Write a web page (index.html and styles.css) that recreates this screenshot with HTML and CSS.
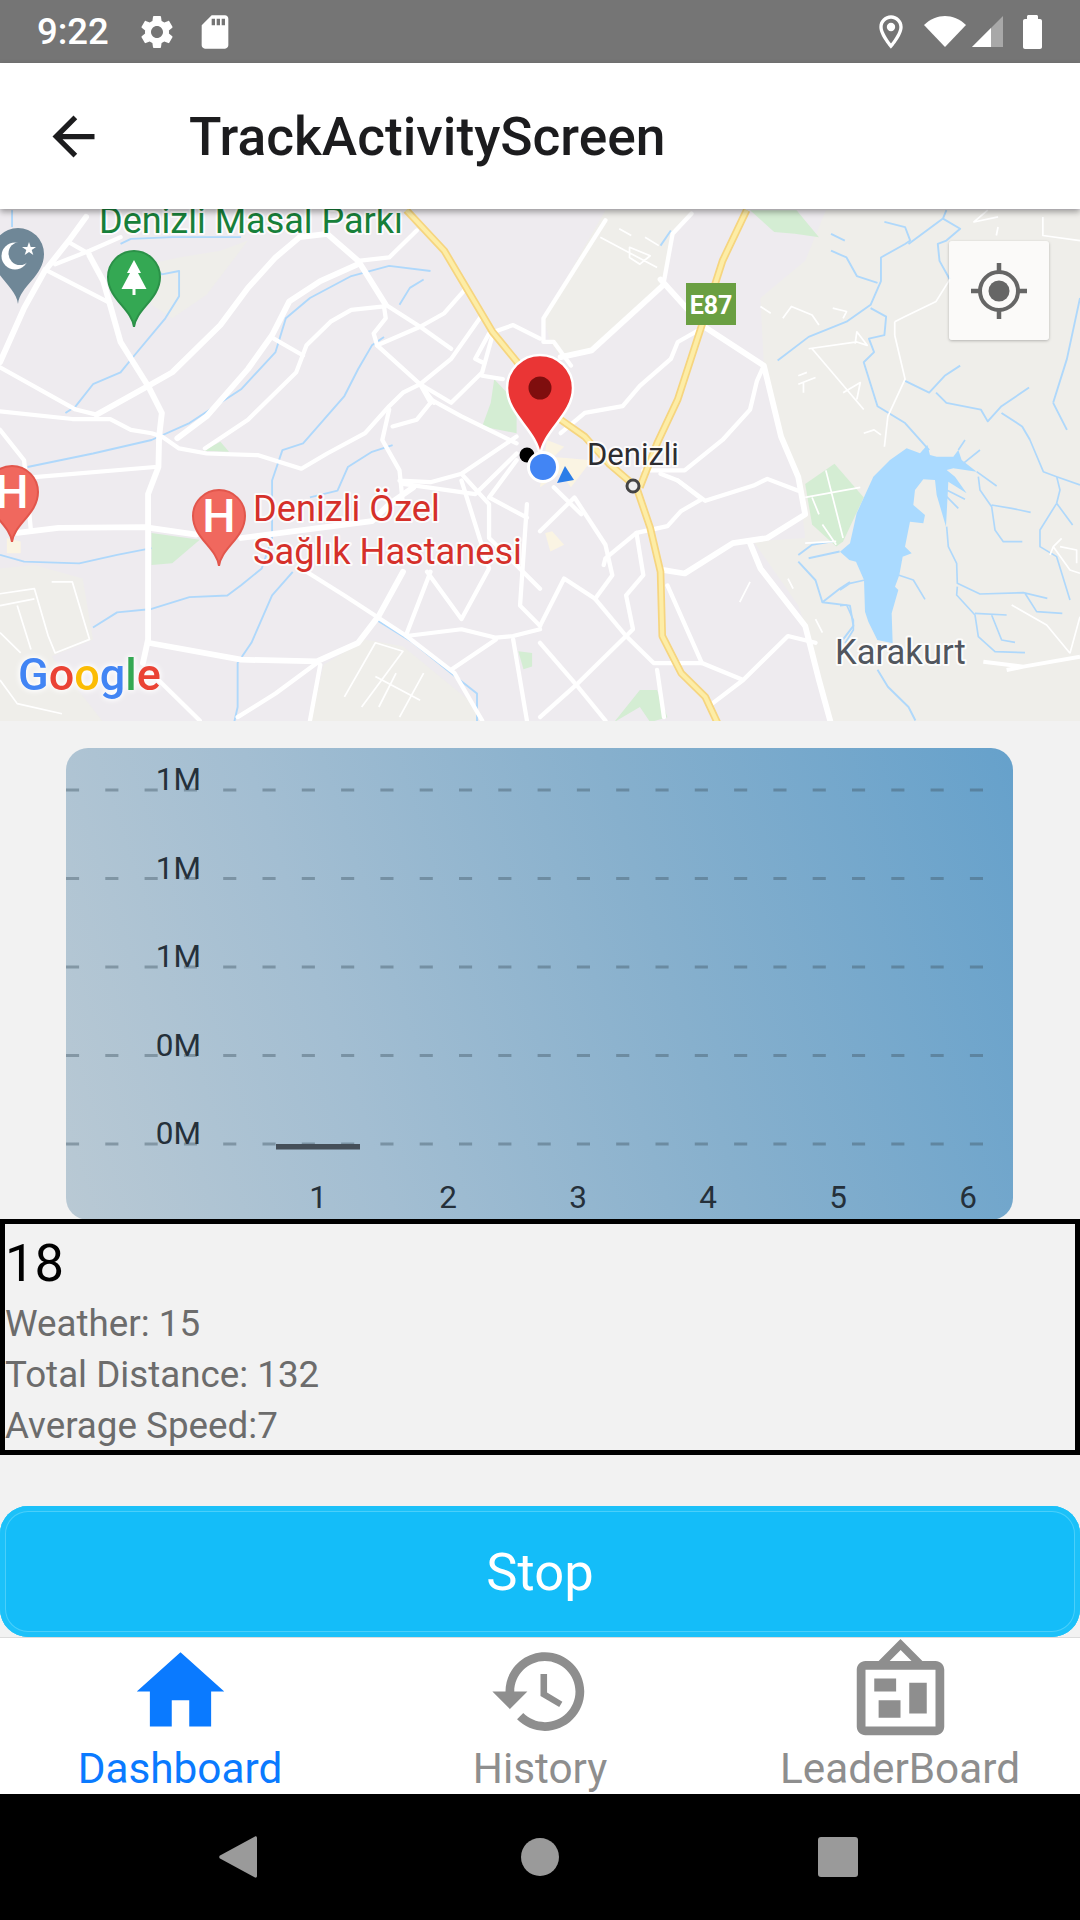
FILE: index.html
```html
<!DOCTYPE html>
<html lang="en">
<head>
<meta charset="utf-8">
<title>TrackActivityScreen</title>
<link rel="stylesheet" href="styles.css">
</head>
<body>
<div class="phone">
  <div class="status-bar">
    <div class="status-left">
      <span class="clock">9:22</span>
      <svg class="si" viewBox="0 0 24 24"><path d="M19.14 12.94c.04-.3.06-.61.06-.94 0-.32-.02-.64-.07-.94l2.03-1.58c.18-.14.23-.41.12-.61l-1.92-3.32c-.12-.22-.37-.29-.59-.22l-2.39.96c-.5-.38-1.03-.7-1.62-.94l-.36-2.54c-.04-.24-.24-.41-.48-.41h-3.84c-.24 0-.43.17-.47.41l-.36 2.54c-.59.24-1.13.57-1.62.94l-2.39-.96c-.22-.08-.47 0-.59.22L2.74 8.87c-.12.21-.08.47.12.61l2.03 1.58c-.05.3-.09.63-.09.94s.02.64.07.94l-2.03 1.58c-.18.14-.23.41-.12.61l1.92 3.32c.12.22.37.29.59.22l2.39-.96c.5.38 1.03.7 1.62.94l.36 2.54c.05.24.24.41.48.41h3.84c.24 0 .44-.17.47-.41l.36-2.54c.59-.24 1.13-.56 1.62-.94l2.39.96c.22.08.47 0 .59-.22l1.92-3.32c.12-.22.07-.47-.12-.61l-2.01-1.58zM12 15.6c-1.98 0-3.6-1.62-3.6-3.6s1.62-3.6 3.6-3.6 3.6 1.62 3.6 3.6-1.62 3.6-3.6 3.6z"/></svg>
      <svg class="si" viewBox="0 0 24 24"><path d="M18 2h-8L4.02 8 4 20c0 1.1.9 2 2 2h12c1.1 0 2-.9 2-2V4c0-1.1-.9-2-2-2zm-6 6h-2V4h2v4zm3 0h-2V4h2v4zm3 0h-2V4h2v4z"/></svg>
    </div>
    <div class="status-right">
      <svg class="si" viewBox="0 0 24 24"><path d="M12 2C8.13 2 5 5.13 5 9c0 5.25 7 13 7 13s7-7.75 7-13c0-3.87-3.13-7-7-7zM7 9c0-2.76 2.24-5 5-5s5 2.24 5 5c0 2.88-2.88 7.19-5 9.88C9.92 16.21 7 11.85 7 9z"/><circle cx="12" cy="9" r="2.5"/></svg>
      <svg class="si-wifi" viewBox="0 0 42 32"><path d="M0 9C6 3 14 0 21 0s15 3 21 9L21 31z"/></svg>
      <svg class="si-signal" viewBox="0 0 31 32"><path class="sig-dim" d="M0 31L31 0v31z"/><path d="M0 31L19 12v19z"/></svg>
      <svg class="si-batt" viewBox="0 0 19 34"><path d="M4 4V1.5C4 .7 4.7 0 5.5 0h8c.8 0 1.500.7 1.500 1.500V4h2c1.100 0 2 .9 2 2v26c0 1.100-.9 2-2 2H2c-1.100 0-2-.9-2-2V6c0-1.100.9-2 2-2z"/></svg>
    </div>
  </div>

  <header class="app-header">
    <svg class="back" viewBox="0 0 24 24"><path d="M20 11H7.83l5.59-5.59L12 4l-8 8 8 8 1.41-1.41L7.83 13H20v-2z"/></svg>
    <h1 class="title">TrackActivityScreen</h1>
  </header>

  <section class="map">
    <svg class="map-canvas" viewBox="0 209 1080 512">
      <defs>
        <path id="pin" d="M0 76C-2 58-26 48-26 26A26 26 0 1 1 26 26C26 48 2 58 0 76Z"/>
      </defs>
      <rect x="0" y="209" width="1080" height="512" class="land"/>

      <g transform="translate(0 200) scale(.3444 .338)">
        <path class="terrain" d="M0 1090L100 1080L240 1120L270 1300L150 1350L300 1545L0 1545Z"/>
        <path class="terrain" d="M940 1375L1060 1300L1170 1320L1385 1500L1385 1545L900 1545Z"/>
        <path class="terrain" d="M430 190L520 170L640 150L720 120L600 280L500 350L440 310Z"/>
        <path class="park" d="M440 985L580 1005L500 1075L440 1080Z"/>
        <path class="park" d="M590 742L640 715L665 745Z"/>
        <path class="park" d="M1435 530L1500 600L1500 690L1400 670L1425 600Z"/>
        <path class="park" d="M1505 1335L1545 1340L1545 1380L1520 1388Z"/>
        <path class="built" d="M20 1000L60 1010L60 1045L20 1045Z"/>
        <g class="stream">
          <path d="M35 30L35 80"/>
          <path d="M440 190L470 220L520 210L520 285L480 350L390 460L350 510L270 545L220 610L190 630"/>
          <path d="M350 130L380 115L500 110L700 110"/>
          <path d="M80 790L270 750L440 710L550 660L700 560L800 450L830 350L900 290L1020 225L1130 195L1250 210"/>
          <path d="M1160 310L1190 260L1230 235"/>
          <path d="M1115 405L1080 430L1040 500L1000 580L880 720L820 740L790 830L790 1000L760 1090L700 1140L660 1170L550 1175L440 1210L340 1220L270 1265"/>
          <path d="M1140 725L1080 745L1010 790L980 860L900 880"/>
          <path d="M0 1050L70 1070L230 1075L340 1050L440 1030"/>
          <path d="M850 1100L790 1170L730 1310L690 1370L690 1500L680 1545"/>
          <path d="M1090 1240L1200 1310L1310 1400L1385 1460L1385 1545"/>
        </g>
        <g class="road-thin">
          <path d="M0 1165L100 1150L140 1290L160 1340L260 1300L210 1130L150 1130"/>
          <path d="M0 1200L100 1180M50 1200L90 1330M0 1280L60 1340"/>
          <path d="M1000 1470L1090 1310L1170 1335L1050 1500M1090 1410L1220 1480M1150 1400L1100 1500M1230 1400L1160 1530"/>
          <path d="M0 1420L50 1490L180 1520"/>
        </g>
        <g class="road">
          <path d="M0 495L220 620L280 635"/>
          <path d="M0 625L210 648L320 648L380 680L440 690L470 700L520 735L600 750L750 755L875 795L950 750L1060 690L1130 610L1170 570L1220 545L1250 600"/>
          <path class="major" d="M260 165L300 240L350 420L430 550L470 630L462 700L460 790L430 870L430 1300L415 1370"/>
          <path class="major" d="M0 480L70 320L130 210L200 120L250 50"/>
          <path d="M130 205L320 305M160 190L260 150L350 110M200 125L260 160"/>
          <path class="major" d="M280 635L430 550L500 510L640 370L720 260L800 170L870 110L950 100L1040 180L1120 310"/>
          <path d="M1040 180L1130 170L1210 90"/>
          <path class="major" d="M515 705L600 640L720 500L790 400L840 300L930 240L1040 190"/>
          <path d="M595 735L720 650L860 510L890 430L960 360L1020 325L1115 315L1120 350L1085 395L1095 430L1220 545L1260 600"/>
          <path d="M795 410L880 460"/>
          <path d="M1120 310L1220 375L1310 440M1095 430L1220 375L1290 335L1350 265"/>
          <path d="M1220 545L1310 470L1400 340M1400 480L1380 470L1420 395L1490 370L1568 410"/>
          <path d="M100 820L450 790"/>
          <path class="major" d="M50 985L170 970L420 968L570 990M700 1000L1080 950L1130 900L1200 850"/>
          <path class="major" d="M430 1310L700 1360L920 1365L1040 1310L1100 1230L1170 1100"/>
          <path d="M920 1370L800 1460L690 1530M930 1375L900 1540"/>
          <path d="M890 1100L1000 1170L1180 1290L1320 1400L1400 1540"/>
          <path d="M1180 1290L1340 1270L1440 1295L1490 1290L1568 1270M1180 1285L1250 1100M1240 1100L1340 1240L1420 1090L1340 830"/>
          <path d="M1440 1300L1310 1390M1490 1300L1530 1540"/>
          <path d="M1130 620L1110 710L1160 800L1170 900M1160 830L1250 835L1340 810L1500 700"/>
          <path d="M1340 810L1420 900L1420 1000L1568 1150"/>
          <path d="M1250 590L1340 640L1500 720M1250 600L1210 650L1140 670"/>
          <path d="M1220 545L1310 600L1400 510L1430 400M1400 520L1460 530"/>
          <path d="M1500 750L1380 870L1170 840M1500 770L1420 880L1530 940M1530 900L1510 1200L1568 1260"/>
          <path d="M0 680L70 770L90 980"/>
          <path d="M460 1420L580 1540"/>
        </g>
        <path class="hw-out" d="M1180 30L1290 150L1430 390L1510 490"/>
        <path class="hw-in" d="M1180 30L1290 150L1430 390L1510 490"/>
      </g>

      <g transform="translate(540 200) scale(.3444 .338)">
        <path class="terrain" d="M190 30L10 350L30 420L60 465L150 445L360 250L385 100L440 30Z"/>
        <path class="terrain" d="M830 30L770 180L640 290L650 490L700 700L750 820L770 1000L620 1010L750 1200L800 1350L850 1545L1568 1545L1568 30Z"/>
        <path class="park" d="M610 30L745 30L810 110L740 100L680 95Z"/>
        <path class="park" d="M770 840L855 780L940 880L880 1010L860 1025L790 960Z"/>
        <path class="park" d="M215 1545L290 1450L340 1450L370 1530L320 1545L290 1500Z"/>
        <path class="built" d="M20 710L70 730L40 760L150 770L120 810L90 850L60 810L0 850Z"/>
        <path class="built" d="M15 985L35 980L70 1020L30 1040Z"/>
        <g class="stream">
          <path d="M1000 65L1060 80L1075 120L1060 130L990 170L990 240L960 310L890 360L780 405L690 475"/>
          <path d="M845 100L885 120M845 150L890 170L920 225L980 245"/>
          <path d="M1180 30L1170 55L1220 85L1180 120L1155 130L1160 180L1190 235M1070 130L1170 55"/>
          <path d="M960 320L1005 345L1000 400L955 410L970 450L940 480L980 610L1060 660L1130 740"/>
          <path d="M1060 535L1130 570L1175 520L1220 490M1150 570L1180 600L1280 620L1300 655L1340 610L1420 555"/>
          <path d="M1340 630L1400 670L1423 710"/>
          <path d="M900 1130L870 1150L820 1190L900 1200L910 1260L880 1300"/>
          <path d="M780 1060L870 1040M750 1070L800 1125L820 1190M750 1050L790 1020L850 1010"/>
          <path d="M1490 600L1530 680M1490 600L1530 470L1568 290"/>
          <path d="M980 1390L1010 1440L1070 1500L1090 1540"/>
          <path d="M380 90L350 135"/>
        </g>
        <g class="road-thin">
          <path d="M1300 30L1260 65L1330 50M1330 80L1325 105M1460 50L1460 105L1568 120"/>
          <path d="M1030 360L1060 345L1150 300L1190 235M1030 400L1060 530L1010 640L1000 730M1030 360L1030 400"/>
          <path d="M780 440L920 420L950 430L920 390L915 425M790 440L940 620M880 570L930 540L920 590"/>
          <path d="M705 350L730 315L790 340L810 370M850 320L890 330L880 350M640 315L670 335"/>
          <path d="M750 520L775 510M750 545L800 525M765 570V540"/>
          <path d="M940 690L970 680L990 695"/>
          <path d="M770 880L930 850M790 880L810 930M830 800L880 1000M820 960L860 1020M770 1015L860 1010"/>
          <path d="M580 1190L610 1130M720 1120L735 1150M800 1240L820 1280"/>
          <path d="M175 110L340 200M230 85L265 105M305 110L345 135M260 140L320 165L290 190L260 170Z"/>
        </g>
        <g class="road">
          <path d="M190 60L10 350L10 420L40 420L90 490"/>
          <path class="major" d="M60 465L150 445L360 250"/>
          <path d="M360 240L385 100L440 40"/>
          <path class="major" d="M350 235L470 370L650 490L700 700L750 820L770 930L660 1000L560 1015L420 1105L360 1095"/>
          <path d="M650 490L630 535L610 620L530 710L420 800L300 800"/>
          <path d="M470 380L400 420L380 470L290 550L240 610L130 630L60 690"/>
          <path d="M750 860L660 825L620 845L480 890L400 830L350 810"/>
          <path d="M400 830L470 885L410 920L370 965L280 985L190 1060L185 1080"/>
          <path class="major" d="M610 1015L640 1090L770 1260L810 1420L850 1568"/>
          <path d="M0 1260L70 1120L160 1180L250 1290L330 1370L470 1370"/>
          <path d="M280 985L300 1110L250 1170L270 1270L110 1430L0 1530"/>
          <path d="M0 980L100 880L190 1020L210 1110L160 1180"/>
          <path d="M40 850L120 930M0 1310L110 1440L190 1540"/>
          <path d="M470 1370L590 1420L720 1290L800 1310M590 1420L500 1490M340 1390L360 1530M370 1140L470 1370"/>
        </g>
        <path class="hw-out" d="M60 650L130 700L200 780L280 850L320 970L350 1100L355 1290L410 1400L480 1470L525 1568"/>
        <path class="hw-out" d="M600 30L530 180L470 370L400 590L340 720L290 850"/>
        <path class="hw-in" d="M60 650L130 700L200 780L280 850L320 970L350 1100L355 1290L410 1400L480 1470L525 1568"/>
        <path class="hw-in" d="M600 30L530 180L470 370L400 590L340 720L290 850"/>
      </g>

      <!-- lake district, traced at 1/3 scale -->
      <g transform="translate(840 440) scale(.3333)">
        <path class="lake" d="M200 25L240 40L262 15L270 45L290 50L340 50L355 30L365 60L410 95L340 85L320 90L345 110L380 160L325 125L318 260L290 165L285 120L250 118L225 150L220 195L255 225L250 250L210 245L195 320L215 340L188 350L178 405L165 440L175 450L155 520L158 610L112 600L85 545L75 515L72 420L48 365L28 360L0 335L30 310L50 220L100 110L150 60Z"/>
        <g class="stream-fine">
          <path d="M320 260L325 320L350 370L352 430L420 462L550 458L622 475"/>
          <path d="M352 440L350 465L405 525L415 590L465 635L555 638"/>
          <path d="M405 520L500 525M455 525L485 600L525 607"/>
          <path d="M555 460L590 515L667 520"/>
          <path d="M410 95L470 138M415 110L420 150L455 200L465 270L490 305L547 305M455 195L515 205L572 217"/>
          <path d="M370 70L420 30M355 30L375 0M320 150L375 178M320 170L355 205"/>
          <path d="M570 0L610 95L650 110L660 150L650 190L600 270L600 320L650 350L690 480M650 190L698 255M650 110L720 135"/>
          <path d="M175 405L220 420L255 478M75 420L30 430L0 450M0 497L20 495L40 540L40 570L15 610"/>
        </g>
        <g class="road-fine">
          <path d="M515 495L620 555L690 640M720 530L690 640"/>
          <path d="M665 295L640 320L690 390L720 400M660 320L710 330L710 370M640 320L630 345"/>
        </g>
        <path class="road-wide" d="M720 650L550 680L430 665M550 680L500 690"/>
      </g>

      <!-- place pins -->
      <g transform="translate(18 228)">
        <use href="#pin" class="pin-slate"/>
        <circle cx="-3" cy="28" r="13.500" class="pin-mark"/>
        <circle cx="2" cy="25.500" r="11.500" class="pin-slate-in"/>
        <path class="pin-mark" d="M11 14l1.700 5h5.300l-4.300 3.100 1.600 5-4.300-3.100-4.300 3.100 1.600-5-4.300-3.100h5.300z"/>
      </g>
      <g transform="translate(134 251)">
        <use href="#pin" class="pin-green"/>
        <path class="pin-mark" d="M0 9L7 22H4L12.500 38H1.500V44H-1.500V38H-12.500L-4 22H-7Z"/>
      </g>
      <g transform="translate(12 466)">
        <use href="#pin" class="pin-red"/>
        <text class="pin-h" x="0" y="42">H</text>
      </g>
      <g transform="translate(219 490)">
        <use href="#pin" class="pin-red"/>
        <text class="pin-h" x="0" y="42">H</text>
      </g>

      <!-- labels -->
      <text class="lbl lbl-green" x="99" y="233">Denizli Masal Parkı</text>
      <text class="lbl lbl-red" x="253" y="521">Denizli Özel</text>
      <text class="lbl lbl-red" x="253" y="564">Sağlık Hastanesi</text>
      <text class="lbl lbl-dark" x="587" y="465">Denizli</text>
      <text class="lbl lbl-grey" x="835" y="664">Karakurt</text>
      <circle cx="633" cy="486" r="6" class="city-dot"/>

      <rect x="686" y="283" width="50" height="42" class="shield"/>
      <text class="shield-text" x="711" y="314">E87</text>

      <text class="google" x="18" y="690"><tspan class="g-blue">G</tspan><tspan class="g-red">o</tspan><tspan class="g-yellow">o</tspan><tspan class="g-blue">g</tspan><tspan class="g-green">l</tspan><tspan class="g-red">e</tspan></text>

      <!-- route markers -->
      <circle cx="527" cy="455" r="7.500" class="blob"/>
      <path class="arrow" d="M557 483L565 466L574 480Z"/>
      <path class="marker" d="M540 456C537 430 507 415 507 388A33 33 0 1 1 573 388C573 415 543 430 540 456Z"/>
      <circle cx="540" cy="388" r="11.500" class="marker-dot"/>
      <circle cx="543" cy="467" r="14.500" class="me"/>
    </svg>

    <div class="locate">
      <svg class="locate-icon" viewBox="0 0 60 60"><circle cx="30" cy="30" r="19" class="loc-ring"/><circle cx="30" cy="30" r="10.500" class="loc-dot"/><path class="loc-tick" d="M30 2V11M30 49V58M2 30H11M49 30H58"/></svg>
    </div>
  </section>

  <main class="content">
    <div class="chart">
      <svg class="chart-canvas" viewBox="66 748 947 472">
        <g class="grid">
          <path d="M66 790H985"/>
          <path d="M66 878.500H985"/>
          <path d="M66 967H985"/>
          <path d="M66 1055.500H985"/>
          <path d="M66 1144H985"/>
        </g>
        <rect x="276" y="1144" width="84" height="5.500" class="bar"/>
        <g class="axis-y">
          <text x="201" y="790">1M</text>
          <text x="201" y="878.500">1M</text>
          <text x="201" y="967">1M</text>
          <text x="201" y="1055.500">0M</text>
          <text x="201" y="1144">0M</text>
        </g>
        <g class="axis-x">
          <text x="318" y="1208">1</text>
          <text x="448" y="1208">2</text>
          <text x="578" y="1208">3</text>
          <text x="708" y="1208">4</text>
          <text x="838" y="1208">5</text>
          <text x="968" y="1208">6</text>
        </g>
      </svg>
    </div>

    <div class="info">
      <div class="info-main">18</div>
      <div class="info-line">Weather: 15</div>
      <div class="info-line">Total Distance: 132</div>
      <div class="info-line">Average Speed:7</div>
    </div>

    <button class="stop">Stop</button>
  </main>

  <nav class="tabs">
    <div class="tab tab-active">
      <svg class="tab-icon" viewBox="0 0 24 24"><path d="M10 20v-6h4v6h5v-8h3L12 3 2 12h3v8z"/></svg>
      <span class="tab-label">Dashboard</span>
    </div>
    <div class="tab">
      <svg class="tab-icon" viewBox="0 0 24 24"><path d="M13 3c-4.970 0-9 4.030-9 9H1l3.890 3.890.07.14L9 12H6c0-3.870 3.130-7 7-7s7 3.130 7 7-3.130 7-7 7c-1.930 0-3.680-.79-4.940-2.060l-1.420 1.420C8.270 19.990 10.510 21 13 21c4.970 0 9-4.030 9-9s-4.030-9-9-9zm-1 5v5l4.280 2.540.72-1.210-3.500-2.080V8H12z"/></svg>
      <span class="tab-label">History</span>
    </div>
    <div class="tab">
      <svg class="tab-icon" viewBox="0 0 24 24"><path d="M12.040 2.500L9.530 5H14.530L12.040 2.500M4 7V20H20V7H4M12 0L17 5V5H20C21.100 5 22 5.890 22 7V20C22 21.100 21.100 22 20 22H4C2.900 22 2 21.100 2 20V7C2 5.890 2.900 5 4 5H7V5L12 0M7 18V14H12V18H7M14 17V10H18V17H14M6 12V9H11V12H6Z"/></svg>
      <span class="tab-label">LeaderBoard</span>
    </div>
  </nav>

  <div class="nav-bar">
    <svg class="nav-back" viewBox="0 0 38 42"><path d="M36 0.500C37 0 38 .8 38 2V40C38 41.200 37 42 36 41.500L1 22.500C0 22 0 20 1 19.500Z"/></svg>
    <span class="nav-home"></span>
    <span class="nav-recent"></span>
  </div>
</div>
</body>
</html>
```

FILE: styles.css
```css
* { box-sizing: border-box; }
html, body { margin: 0; padding: 0; }
body { width: 1080px; height: 1920px; overflow: hidden; background: #f2f2f2; font-family: Roboto, "Noto Sans", sans-serif; }
.phone { width: 1080px; height: 1920px; display: flex; flex-direction: column; }

/* status bar */
.status-bar { height: 63px; flex: none; background: #757575; display: flex; justify-content: space-between; align-items: center; color: #fff; padding: 0 38px 0 37px; }
.status-left, .status-right { display: flex; align-items: center; }
.clock { font-size: 36.500px; font-weight: 500; width: 72px; margin-right: 28px; white-space: nowrap; }
.si { width: 40px; height: 40px; fill: #fff; display: block; }
.status-left .si + .si { margin-left: 18px; }
.si-wifi { width: 42px; height: 32px; fill: #fff; margin-left: 13px; }
.si-signal { width: 31px; height: 32px; fill: #fff; margin-left: 6px; }
.sig-dim { fill: #a8a8a8; }
.si-batt { width: 19px; height: 34px; fill: #fff; margin-left: 20px; }

/* header */
.app-header { height: 146px; flex: none; background: #fff; display: flex; align-items: center; padding-left: 42px; box-shadow: 0 3px 6px rgba(0,0,0,.35); position: relative; z-index: 2; }
.back { width: 63px; height: 63px; fill: #1c1c1e; margin-right: 84px; flex: none; }
.title { margin: 4px 0 0; font-size: 53.300px; font-weight: 500; color: #1c1c1e; line-height: 1; }

/* map */
.map { height: 512px; flex: none; position: relative; overflow: hidden; }
.map-canvas { width: 1080px; height: 512px; display: block; }
.land { fill: #eeebef; }
.terrain { fill: #efeeea; }
.park { fill: #d4edd3; }
.built { fill: #faf4e3; }
.lake { fill: #aadaff; }
.stream path { fill: none; stroke: #afd8fb; stroke-width: 5.500; stroke-linejoin: round; }
.stream-fine path { fill: none; stroke: #afd8fb; stroke-width: 5; stroke-linejoin: round; }
.road-fine path { fill: none; stroke: #fff; stroke-width: 5; stroke-linejoin: round; }
.road-wide { fill: none; stroke: #fff; stroke-width: 12; stroke-linejoin: round; }
.road path { fill: none; stroke: #fff; stroke-width: 12.500; stroke-linejoin: round; stroke-linecap: round; }
.road path.major { stroke-width: 17; }
.road-thin path { fill: none; stroke: #fff; stroke-width: 5; stroke-linejoin: round; }
.hw-out { fill: none; stroke: #f6d57f; stroke-width: 22; stroke-linejoin: round; }
.hw-in { fill: none; stroke: #fdeda6; stroke-width: 12; stroke-linejoin: round; }
.pin-slate { fill: #6f8797; }
.pin-slate-in { fill: #6f8797; }
.pin-green { fill: #34a853; stroke: #2b9148; stroke-width: 2; }
.pin-red { fill: #f0685e; stroke: #e2564c; stroke-width: 2; }
.pin-mark { fill: #fff; }
.pin-h { font-family: Roboto, sans-serif; font-size: 47px; font-weight: 500; fill: #fff; text-anchor: middle; }
.lbl { font-family: Roboto, sans-serif; paint-order: stroke; stroke: rgba(255,255,255,.85); stroke-width: 4px; stroke-linejoin: round; }
.lbl-green { font-size: 36px; fill: #17803a; }
.lbl-red { font-size: 36.200px; fill: #d5302a; }
.lbl-dark { font-size: 31px; fill: #2d2d30; }
.lbl-grey { font-size: 34.600px; fill: #51565e; }
.city-dot { fill: #eee; stroke: #444; stroke-width: 3; }
.shield { fill: #6a9f42; }
.shield-text { font-family: Roboto, sans-serif; font-size: 25px; font-weight: 700; fill: #fff; text-anchor: middle; }
.google { font-family: Roboto, sans-serif; font-size: 45px; font-weight: 500; filter: drop-shadow(0 0 2px rgba(255,255,255,.95)) drop-shadow(0 0 3px rgba(255,255,255,.9)); }
.g-blue { fill: #4285f4; }
.g-red { fill: #ea4335; }
.g-yellow { fill: #fbbc05; }
.g-green { fill: #34a853; }
.blob { fill: #000; }
.arrow { fill: #2a7de8; }
.marker { fill: #ea3535; stroke: #fff; stroke-width: 2.500; }
.marker-dot { fill: #7f0e0e; }
.me { fill: #4285f4; stroke: #fff; stroke-width: 3; }
.locate { position: absolute; left: 949px; top: 32px; width: 100px; height: 99px; background: rgba(255,255,255,.72); border-radius: 3px; box-shadow: 0 1px 3px rgba(0,0,0,.25); display: flex; align-items: center; justify-content: center; }
.locate-icon { width: 60px; height: 60px; }
.loc-ring { fill: none; stroke: #666; stroke-width: 4; }
.loc-dot { fill: #666; }
.loc-tick { fill: none; stroke: #666; stroke-width: 4.500; }

/* content */
.content { flex: 1; background: #f2f2f2; display: flex; flex-direction: column; }
.chart { width: 947px; height: 472px; margin: 27px 0 0 66px; border-radius: 22px; overflow: hidden; background: linear-gradient(72deg, #b9c9d4 0%, #a3bed2 30%, #87b0cd 62%, #66a1cb 100%); flex: none; }
.chart-canvas { width: 947px; height: 472px; display: block; }
.grid path { fill: none; stroke: rgba(65,85,100,.42); stroke-width: 3; stroke-dasharray: 13.100 26.200; }
.bar { fill: #454f59; }
.axis-y text, .axis-x text { font-family: Roboto, sans-serif; font-size: 31.500px; fill: #25303a; }
.axis-y text { text-anchor: end; }
.axis-x text { text-anchor: middle; }

.info { height: 236px; margin-top: -1px; border: 5px solid #000; padding: 5px 0 0; background: #f2f2f2; position: relative; flex: none; }
.info-main { font-size: 52.500px; line-height: 69px; color: #000; }
.info-line { font-size: 36.750px; line-height: 51px; color: #6c6c6c; }

.stop { height: 131px; width: 1080px; margin-top: 51px; flex: none; border: 0; border-radius: 28px; background: #14bdf9; box-shadow: inset 0 0 0 5px #1cc1f9, inset 0 0 0 6px #4acffa; color: #fff; font-family: Roboto, sans-serif; font-size: 52.500px; padding: 0; }

/* tabs */
.tabs { height: 157px; flex: none; background: #fff; border-top: 1px solid #dcdcdc; display: grid; grid-template-columns: repeat(3, 1fr); }
.tab { display: flex; flex-direction: column; align-items: center; color: #8e8e8e; fill: #8e8e8e; padding-top: 1px; }
.tab-active { color: #0a7aff; fill: #0a7aff; }
.tab-icon { width: 105px; height: 105px; display: block; flex: none; }
.tab-label { font-size: 42.300px; line-height: 50px; white-space: nowrap; }

/* android nav */
.nav-bar { height: 126px; flex: none; background: #000; display: flex; align-items: center; padding-left: 219px; }
.nav-back { width: 38px; height: 42px; fill: #9a9a9a; flex: none; }
.nav-home { width: 38px; height: 38px; border-radius: 50%; background: #9a9a9a; margin-left: 264px; flex: none; }
.nav-recent { width: 40px; height: 40px; border-radius: 3px; background: #9a9a9a; margin-left: 259px; flex: none; }
```
